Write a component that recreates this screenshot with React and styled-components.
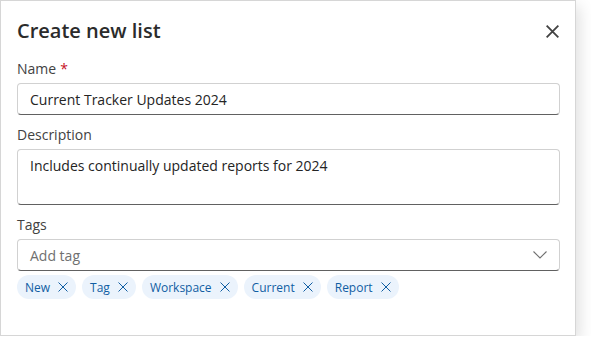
import React from 'react';
import styled, { createGlobalStyle } from 'styled-components';

const GlobalStyle = createGlobalStyle`
  body {
    margin: 0;
    background: #ffffff;
    font-family: 'Open Sans', 'Noto Sans', sans-serif;
    color: #242424;
  }
`;

const Dialog = styled.section`
  box-sizing: border-box;
  width: 576px;
  height: 336px;
  padding: 15px 15px 0 16px;
  background: #ffffff;
  border: 1px solid #d6d6d6;
  box-shadow: 4px 6px 14px rgba(0, 0, 0, 0.12);
`;

const Header = styled.header`
  display: flex;
  align-items: center;
  justify-content: space-between;
  margin-bottom: 13px;
`;

const Title = styled.h2`
  margin: 0;
  font-size: 20px;
  line-height: 30px;
  font-weight: 600;
  color: #2b2b2b;
`;

const CloseButton = styled.button`
  display: flex;
  align-items: center;
  justify-content: center;
  width: 24px;
  height: 24px;
  margin-right: -4px;
  padding: 0;
  border: none;
  background: none;
  color: #424242;
  cursor: pointer;
`;

const Field = styled.div`
  display: flex;
  flex-direction: column;
  gap: ${(p) => p.$gap || '4px'};
  margin-bottom: ${(p) => p.$mb || '10px'};
`;

const Label = styled.label`
  font-size: 14px;
  line-height: 20px;
  color: #424242;

  & span {
    color: #c50f1f;
    margin-left: 4px;
  }
`;

const inputBox = `
  box-sizing: border-box;
  width: 100%;
  border: 1px solid #d1d1d1;
  border-bottom-color: #616161;
  border-radius: 4px;
  background: #ffffff;
  font-family: 'Open Sans', 'Noto Sans', sans-serif;
  font-size: 14px;
  color: #242424;
`;

const Input = styled.div`
  ${inputBox}
  height: 32px;
  padding: 0 12px;
  display: flex;
  align-items: center;
`;

const TextArea = styled.div`
  ${inputBox}
  height: 56px;
  padding: 6px 12px;
  line-height: 20px;
`;

const Combo = styled.div`
  ${inputBox}
  height: 32px;
  padding: 0 12px;
  display: flex;
  align-items: center;
  justify-content: space-between;
  color: #707070;
`;

const TagList = styled.ul`
  display: flex;
  gap: 6px;
  margin: 0;
  padding: 0;
  list-style: none;
`;

const Tag = styled.li`
  display: flex;
  align-items: center;
  gap: 8px;
  height: 24px;
  padding: 0 8px;
  border-radius: 12px;
  background: #ebf3fc;
  color: #115ea3;
  font-size: 12px;
`;

const XIcon = ({ size = 10, stroke = 1 }) => (
  <svg width={size} height={size} viewBox="0 0 10 10" fill="none">
    <path d="M0.5 0.5L9.5 9.5M9.5 0.5L0.5 9.5" stroke="currentColor" strokeWidth={stroke} />
  </svg>
);

const Chevron = () => (
  <svg width="14" height="8" viewBox="0 0 14 8" fill="none">
    <path d="M0.5 0.5L7 7L13.5 0.5" stroke="#707070" strokeWidth="1.1" />
  </svg>
);

const tags = ['New', 'Tag', 'Workspace', 'Current', 'Report'];

const App = () => {
  return (
    <>
      <GlobalStyle />
      <Dialog>
        <Header>
          <Title>Create new list</Title>
          <CloseButton aria-label="Close">
            <XIcon size={13} stroke={1.4} />
          </CloseButton>
        </Header>

        <Field>
          <Label>Name<span>*</span></Label>
          <Input>Current Tracker Updates 2024</Input>
        </Field>

        <Field>
          <Label>Description</Label>
          <TextArea>Includes continually updated reports for 2024</TextArea>
        </Field>

        <Field $mb="4px">
          <Label>Tags</Label>
          <Combo>
            Add tag
            <Chevron />
          </Combo>
        </Field>

        <TagList>
          {tags.map((t) => (
            <Tag key={t}>
              {t}
              <XIcon />
            </Tag>
          ))}
        </TagList>
      </Dialog>
    </>
  );
};

export default App;
